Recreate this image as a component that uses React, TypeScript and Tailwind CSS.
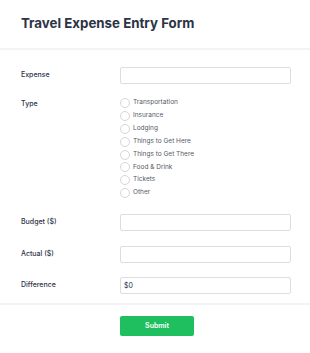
import React, { useState } from "react";

const types = [
  "Transportation",
  "Insurance",
  "Lodging",
  "Things to Get Here",
  "Things to Get There",
  "Food & Drink",
  "Tickets",
  "Other",
];

const FieldRow = ({
  label,
  children,
  className = "",
}: {
  label: string;
  children: React.ReactNode;
  className?: string;
}) => (
  <div className={`flex items-center ${className}`}>
    <label className="w-[99px] shrink-0 text-[7px] font-medium text-[#2c3345]">
      {label}
    </label>
    {children}
  </div>
);

const TextInput = ({ value }: { value?: string }) => (
  <input
    type="text"
    defaultValue={value}
    className="h-[17px] w-[171px] rounded-[2px] border border-[#dcdde3] bg-white px-[3px] text-[7px] text-[#2c3345] outline-none"
  />
);

export default function App() {
  const [selected, setSelected] = useState<string | null>(null);

  return (
    <div
      className="w-[310px] h-[353px] bg-white"
      style={{ fontFamily: "Inter, 'Noto Sans', sans-serif" }}
    >
      <div className="flex h-[50px] items-center pl-[21px] border-b-2 border-[#f3f3f5]">
        <h1 className="text-[13.3px] font-bold text-[#2c3345]">
          Travel Expense Entry Form
        </h1>
      </div>

      <div className="pl-[21px]">
        <FieldRow label="Expense" className="mt-[16.5px]">
          <TextInput />
        </FieldRow>

        <div className="mt-[13px] flex items-start">
          <label className="w-[99px] shrink-0 text-[7px] font-medium leading-[13px] text-[#2c3345]">
            Type
          </label>
          <div className="flex flex-col">
            {types.map((t) => (
              <label
                key={t}
                className="flex h-[12.9px] items-center gap-[3px] cursor-pointer"
                onClick={() => setSelected(t)}
              >
                <span
                  className={`h-[10px] w-[10px] rounded-full border ${
                    selected === t ? "border-[#22c55e]" : "border-[#d5d6da]"
                  } bg-white`}
                />
                <span className="text-[6.5px] text-[#555a66]">{t}</span>
              </label>
            ))}
          </div>
        </div>

        <FieldRow label="Budget ($)" className="mt-[14px]">
          <TextInput />
        </FieldRow>
        <FieldRow label="Actual ($)" className="mt-[15px]">
          <TextInput />
        </FieldRow>
        <FieldRow label="Difference" className="mt-[14.5px]">
          <TextInput value="$0" />
        </FieldRow>
      </div>

      <div className="mt-[8.5px] flex border-t-2 border-[#f3f3f5] pl-[120px] pt-[11.5px]">
        <button className="h-[20px] w-[74px] rounded-[2px] bg-[#1fbf5f] text-[7px] font-semibold text-white">
          Submit
        </button>
      </div>
    </div>
  );
}
